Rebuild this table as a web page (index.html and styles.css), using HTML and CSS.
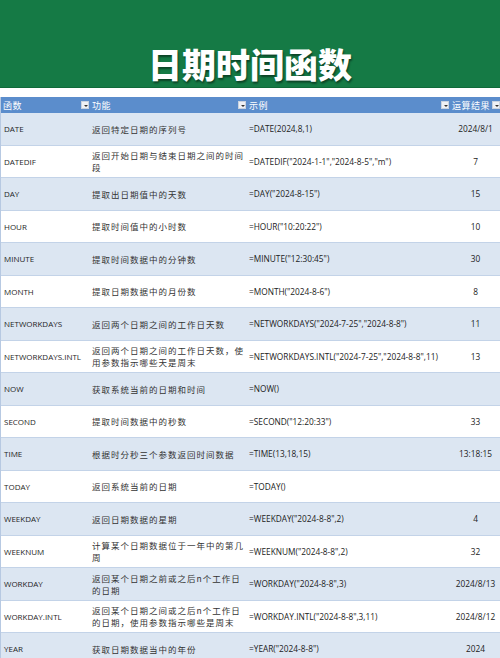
FILE: index.html
```html
<!DOCTYPE html>
<html lang="zh">
<head>
<meta charset="utf-8">
<title>日期时间函数</title>
<link rel="stylesheet" href="styles.css">
</head>
<body>
<header class="banner"><h1 class="title">日期时间函数</h1></header>
<div class="gap"></div>
<div class="table">
  <div class="th"><span>函数</span><i class="fb"></i></div>
  <div class="th"><span>功能</span><i class="fb"></i></div>
  <div class="th"><span>示例</span><i class="fb"></i></div>
  <div class="th last"><span>运算结果</span><i class="fb"></i></div>

  <div class="row alt"><div class="c1">DATE</div><div class="c2">返回特定日期的序列号</div><div class="c3">=DATE(2024,8,1)</div><div class="c4">2024/8/1</div></div>
  <div class="row"><div class="c1">DATEDIF</div><div class="c2">返回开始日期与结束日期之间的时间段</div><div class="c3">=DATEDIF("2024-1-1","2024-8-5","m")</div><div class="c4">7</div></div>
  <div class="row alt"><div class="c1">DAY</div><div class="c2">提取出日期值中的天数</div><div class="c3">=DAY("2024-8-15")</div><div class="c4">15</div></div>
  <div class="row"><div class="c1">HOUR</div><div class="c2">提取时间值中的小时数</div><div class="c3">=HOUR("10:20:22")</div><div class="c4">10</div></div>
  <div class="row alt"><div class="c1">MINUTE</div><div class="c2">提取时间数据中的分钟数</div><div class="c3">=MINUTE("12:30:45")</div><div class="c4">30</div></div>
  <div class="row"><div class="c1">MONTH</div><div class="c2">提取日期数据中的月份数</div><div class="c3">=MONTH("2024-8-6")</div><div class="c4">8</div></div>
  <div class="row alt"><div class="c1">NETWORKDAYS</div><div class="c2">返回两个日期之间的工作日天数</div><div class="c3">=NETWORKDAYS("2024-7-25","2024-8-8")</div><div class="c4">11</div></div>
  <div class="row"><div class="c1">NETWORKDAYS.INTL</div><div class="c2">返回两个日期之间的工作日天数，使用参数指示哪些天是周末</div><div class="c3">=NETWORKDAYS.INTL("2024-7-25","2024-8-8",11)</div><div class="c4">13</div></div>
  <div class="row alt"><div class="c1">NOW</div><div class="c2">获取系统当前的日期和时间</div><div class="c3">=NOW()</div><div class="c4"></div></div>
  <div class="row"><div class="c1">SECOND</div><div class="c2">提取时间数据中的秒数</div><div class="c3">=SECOND("12:20:33")</div><div class="c4">33</div></div>
  <div class="row alt"><div class="c1">TIME</div><div class="c2">根据时分秒三个参数返回时间数据</div><div class="c3">=TIME(13,18,15)</div><div class="c4">13:18:15</div></div>
  <div class="row"><div class="c1">TODAY</div><div class="c2">返回系统当前的日期</div><div class="c3">=TODAY()</div><div class="c4"></div></div>
  <div class="row alt"><div class="c1">WEEKDAY</div><div class="c2">返回日期数据的星期</div><div class="c3">=WEEKDAY("2024-8-8",2)</div><div class="c4">4</div></div>
  <div class="row"><div class="c1">WEEKNUM</div><div class="c2">计算某个日期数据位于一年中的第几周</div><div class="c3">=WEEKNUM("2024-8-8",2)</div><div class="c4">32</div></div>
  <div class="row alt"><div class="c1">WORKDAY</div><div class="c2">返回某个日期之前或之后n个工作日的日期</div><div class="c3">=WORKDAY("2024-8-8",3)</div><div class="c4">2024/8/13</div></div>
  <div class="row"><div class="c1">WORKDAY.INTL</div><div class="c2">返回某个日期之间或之后n个工作日的日期，使用参数指示哪些是周末</div><div class="c3">=WORKDAY.INTL("2024-8-8",3,11)</div><div class="c4">2024/8/12</div></div>
  <div class="row alt"><div class="c1">YEAR</div><div class="c2">获取日期数据当中的年份</div><div class="c3">=YEAR("2024-8-8")</div><div class="c4">2024</div></div>
</div>
</body>
</html>
```
FILE: styles.css
```css
html, body {
  margin: 0;
  padding: 0;
  background: #ffffff;
  overflow: hidden;
}
body {
  width: 500px;
  height: 658px;
  font-family: "Open Sans", "Noto Sans CJK SC", sans-serif;
  color: #2a2a2a;
}
.banner {
  height: 88px;
  background: #157a45;
  border-bottom: 1px solid #0f6a39;
  box-sizing: border-box;
  padding-top: 47px;
}
.title {
  margin: 0;
  text-align: center;
  color: #ffffff;
  font-family: "Noto Sans CJK SC", sans-serif;
  font-weight: 900;
  font-size: 34px;
  line-height: 34px;
  letter-spacing: 0px;
  text-shadow: 1px 2px 2px rgba(0, 0, 0, 0.45);
}
.gap {
  height: 9px;
}
.table {
  display: grid;
  grid-template-columns: 89px 157px 203px 51px;
  grid-auto-rows: 32.5px;
  grid-template-rows: 16px;
  border-left: 1px solid #b7c9e2;
}
.th {
  background: #5b8dcc;
  color: #ffffff;
  font-size: 9px;
  display: flex;
  align-items: center;
  justify-content: space-between;
  padding-left: 2px;
  padding-right: 1px;
  font-family: "Noto Sans CJK SC", sans-serif;
  letter-spacing: 0.5px;
}
.th.last {
  padding-left: 2px;
}
.fb {
  width: 8px;
  height: 8px;
  background: #eef1f5;
  border: 1px solid #c9d3df;
  box-sizing: border-box;
  position: relative;
  flex: none;
}
.fb::after {
  content: "";
  position: absolute;
  left: 1.5px;
  top: 2.5px;
  border-left: 2.5px solid transparent;
  border-right: 2.5px solid transparent;
  border-top: 2.5px solid #333;
}
.row {
  display: contents;
}
.row > div {
  display: flex;
  align-items: center;
  border-bottom: 1px solid #c3d3e8;
  box-sizing: border-box;
  background: #ffffff;
}
.row.alt > div {
  background: #dce6f2;
}
.c1 {
  font-size: 8px;
  padding-left: 3px;
  color: #1f1f1f;
}
.c2 {
  font-family: "Noto Sans CJK SC", sans-serif;
  font-size: 8.5px;
  letter-spacing: 1px;
  line-height: 12px;
  padding-left: 2px;
  padding-right: 2px;
  color: #333;
}
.c3 {
  font-size: 8.3px;
  padding-left: 2px;
  white-space: nowrap;
  color: #222;
}
.c4 {
  font-size: 8.3px;
  justify-content: center;
  color: #222;
}
```
